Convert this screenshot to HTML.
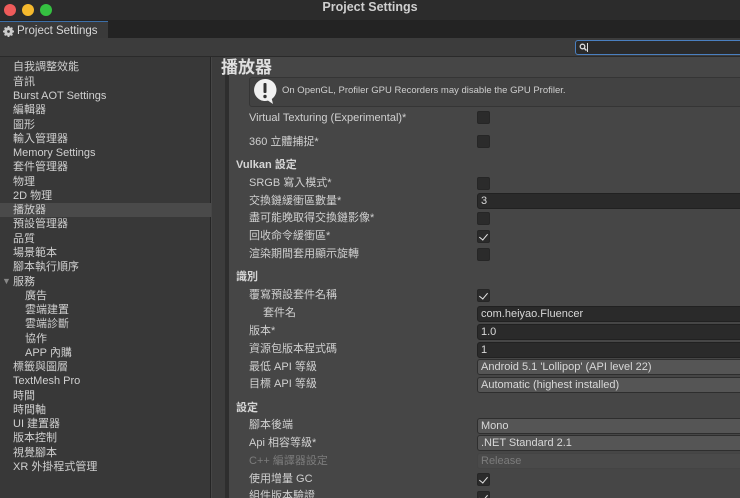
<!DOCTYPE html>
<html><head><meta charset="utf-8"><style>
*{margin:0;padding:0;box-sizing:border-box}
html,body{width:740px;height:498px;overflow:hidden}
body{background:#464646;font-family:"Liberation Sans","Noto Sans CJK TC",sans-serif;font-size:11px;color:#d2d2d2;position:relative}
.abs{position:absolute}
#title{left:0;top:0;width:740px;height:20px;background:#2c2c2c}
#title .t{left:0;width:740px;top:0;text-align:center;font-weight:bold;font-size:12.5px;color:#cfcfcf;line-height:14px}
.dot{top:4px;width:12px;height:12px;border-radius:50%}
#tabbar{left:0;top:20px;width:740px;height:18px;background:#232323}
#tab{left:0;top:21px;width:108px;height:17px;background:#3a3a3a;border-top:1px solid #3d6fa8;font-size:11.5px;color:#d8d8d8;line-height:18px;padding-left:17px}
#tool{left:0;top:38px;width:740px;height:19px;background:#3c3c3c;border-bottom:1px solid #2a2a2a}
#search{left:575px;top:40px;width:170px;height:15px;background:#2a2a2a;border:1px solid #4a7fbf;border-radius:3px}
#side{left:0;top:57px;width:211px;height:441px;background:#383838;border-right:1px solid #252525}
.si{position:absolute;left:13px;height:14px;line-height:14px;font-size:11px;color:#d0d0d0;white-space:nowrap}
.sub{left:25px}
#sel{left:0;top:203px;width:211px;height:14px;background:#4a4a4a}
#gut{left:212px;top:57px;width:13px;height:441px;background:#3c3c3c}
#gutl{left:225px;top:75px;width:4px;height:423px;background:#2e2e2e}
.lb{position:absolute;left:249px;white-space:nowrap;font-size:11px;color:#d0d0d0;line-height:14px}
.hd{position:absolute;left:236px;font-weight:bold;white-space:nowrap;font-size:11px;color:#d6d6d6;line-height:14px}
.cb{position:absolute;left:477px;width:13px;height:13px;background:#2b2b2b;border-radius:2px;border:1px solid #262626}
.cb.on::after{content:"";position:absolute;left:3px;top:1px;width:4px;height:7px;border:solid #e6e6e6;border-width:0 1.6px 1.6px 0;transform:rotate(40deg)}
.tf{position:absolute;left:477px;width:280px;height:16px;background:#2a2a2a;border:1px solid #212121;border-radius:3px;padding-left:3px;line-height:14px;color:#d8d8d8;white-space:nowrap}
.dd{background:#555;border-color:#2e2e2e}
.dis{background:#4a4a4a;color:#7c7c7c;border-color:#444}
</style></head><body>
<div id="title" class="abs"><div class="abs t">Project Settings</div>
<div class="abs dot" style="left:4px;background:#ee5b5a"></div>
<div class="abs dot" style="left:22px;background:#f5b92d"></div>
<div class="abs dot" style="left:40px;background:#35c141"></div></div>
<div id="tabbar" class="abs"></div>
<div id="tab" class="abs"><svg class="abs" style="left:3px;top:4px" width="11" height="11" viewBox="0 0 12 12"><circle cx="6" cy="6" r="3.6" fill="none" stroke="#ccc" stroke-width="2.4"/><g stroke="#ccc" stroke-width="2"><line x1="6" y1="0" x2="6" y2="12"/><line x1="0" y1="6" x2="12" y2="6"/><line x1="1.8" y1="1.8" x2="10.2" y2="10.2"/><line x1="10.2" y1="1.8" x2="1.8" y2="10.2"/></g><circle cx="6" cy="6" r="1.5" fill="#3a3a3a"/></svg>Project Settings</div>
<div id="tool" class="abs"></div>
<div id="search" class="abs"><svg class="abs" style="left:3px;top:2px" width="8" height="9"><circle cx="3.5" cy="3.5" r="2.3" fill="none" stroke="#ddd" stroke-width="1.3"/><line x1="5" y1="5" x2="7.5" y2="7.5" stroke="#ddd" stroke-width="1.5"/></svg><div class="abs" style="left:11px;top:2px;width:1px;height:9px;background:#ddd"></div></div>
<div id="side" class="abs"></div>
<div id="sel" class="abs"></div>
<div class="si" style="top:60px">自我調整效能</div>
<div class="si" style="top:75px">音訊</div>
<div class="si" style="top:89px">Burst AOT Settings</div>
<div class="si" style="top:103px">編輯器</div>
<div class="si" style="top:118px">圖形</div>
<div class="si" style="top:132px">輸入管理器</div>
<div class="si" style="top:146px">Memory Settings</div>
<div class="si" style="top:160px">套件管理器</div>
<div class="si" style="top:175px">物理</div>
<div class="si" style="top:189px">2D 物理</div>
<div class="si" style="top:203px">播放器</div>
<div class="si" style="top:217px">預設管理器</div>
<div class="si" style="top:232px">品質</div>
<div class="si" style="top:246px">場景範本</div>
<div class="si" style="top:260px">腳本執行順序</div>
<div class="si" style="top:274px;left:2px;color:#888;font-size:9px">▼</div>
<div class="si" style="top:275px">服務</div>
<div class="si sub" style="top:289px">廣告</div>
<div class="si sub" style="top:303px">雲端建置</div>
<div class="si sub" style="top:317px">雲端診斷</div>
<div class="si sub" style="top:332px">協作</div>
<div class="si sub" style="top:346px">APP 內購</div>
<div class="si" style="top:360px">標籤與圖層</div>
<div class="si" style="top:374px">TextMesh Pro</div>
<div class="si" style="top:389px">時間</div>
<div class="si" style="top:403px">時間軸</div>
<div class="si" style="top:417px">UI 建置器</div>
<div class="si" style="top:431px">版本控制</div>
<div class="si" style="top:446px">視覺腳本</div>
<div class="si" style="top:460px">XR 外掛程式管理</div>
<div id="gut" class="abs"></div>
<div id="gutl" class="abs"></div>
<div class="abs" style="left:221px;top:57px;font-size:17px;font-weight:bold;color:#e0e0e0;line-height:22px">播放器</div>
<div class="abs" style="left:249px;top:77px;width:500px;height:30px;background:#424242;border:1px solid #353535;border-radius:3px"></div>
<svg class="abs" style="left:253px;top:78px" width="26" height="27" viewBox="0 0 26 27"><path d="M12 1a11 11 0 1 0 3 21.6l5 3.4-1.2-5A11 11 0 0 0 12 1z" fill="#f0f0f0"/><rect x="10.5" y="5" width="3" height="10" rx="1" fill="#333"/><circle cx="12" cy="18.5" r="1.7" fill="#333"/></svg>
<div class="abs" style="left:282px;top:85px;font-size:9.5px;color:#cfcfcf;white-space:nowrap">On OpenGL, Profiler GPU Recorders may disable the GPU Profiler.</div>
<div class="lb" style="top:111px">Virtual Texturing (Experimental)*</div><div class="cb" style="top:111px"></div>
<div class="lb" style="top:135px">360 立體捕捉*</div><div class="cb" style="top:135px"></div>
<div class="hd" style="top:158px">Vulkan 設定</div>
<div class="lb" style="top:176px">SRGB 寫入模式*</div><div class="cb" style="top:177px"></div>
<div class="lb" style="top:194px">交換鏈緩衝區數量*</div><div class="tf" style="top:193px">3</div>
<div class="lb" style="top:211px">盡可能晚取得交換鏈影像*</div><div class="cb" style="top:212px"></div>
<div class="lb" style="top:229px">回收命令緩衝區*</div><div class="cb on" style="top:230px"></div>
<div class="lb" style="top:247px">渲染期間套用顯示旋轉</div><div class="cb" style="top:248px"></div>
<div class="hd" style="top:270px">識別</div>
<div class="lb" style="top:288px">覆寫預設套件名稱</div><div class="cb on" style="top:289px"></div>
<div class="lb" style="top:306px;left:263px">套件名</div><div class="tf" style="top:306px">com.heiyao.Fluencer</div>
<div class="lb" style="top:324px">版本*</div><div class="tf" style="top:324px">1.0</div>
<div class="lb" style="top:342px">資源包版本程式碼</div><div class="tf" style="top:342px">1</div>
<div class="lb" style="top:360px">最低 API 等級</div><div class="tf dd" style="top:359px">Android 5.1 'Lollipop' (API level 22)</div>
<div class="lb" style="top:377px">目標 API 等級</div><div class="tf dd" style="top:377px">Automatic (highest installed)</div>
<div class="hd" style="top:401px">設定</div>
<div class="lb" style="top:418px">腳本後端</div><div class="tf dd" style="top:418px">Mono</div>
<div class="lb" style="top:436px">Api 相容等級*</div><div class="tf dd" style="top:435px">.NET Standard 2.1</div>
<div class="lb" style="top:454px;color:#7c7c7c">C++ 編譯器設定</div><div class="tf dis" style="top:453px">Release</div>
<div class="lb" style="top:472px">使用增量 GC</div><div class="cb on" style="top:473px"></div>
<div class="lb" style="top:489px">組件版本驗證</div><div class="cb on" style="top:491px"></div>
</body></html>
